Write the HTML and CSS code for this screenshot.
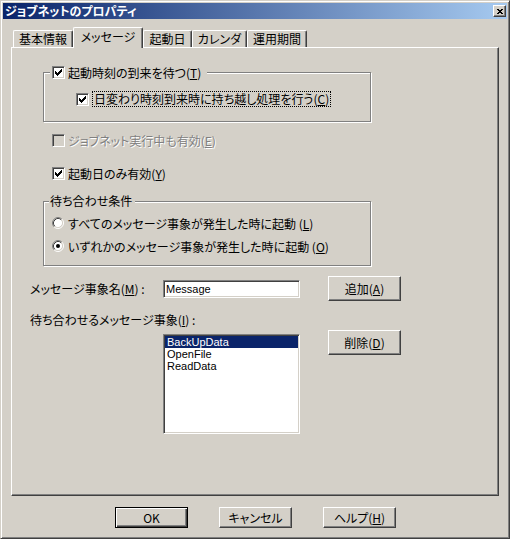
FILE: index.html
```html
<!DOCTYPE html>
<html lang="ja">
<head>
<meta charset="utf-8">
<title>ジョブネットのプロパティ</title>
<link rel="stylesheet" href="styles.css">
</head>
<body>
<div class="window">
  <div class="titlebar">
    <span class="title">ジョブネットのプロパティ</span>
    <span class="close"><svg width="6" height="5" viewBox="0 0 6 5"><path d="M0 0h2v1H0zM4 0h2v1H4zM1 1h4v1H1zM2 2h2v1H2zM1 3h4v1H1zM0 4h2v1H0zM4 4h2v1H4z" fill="#000"/></svg></span>
  </div>
  <div class="content">
    <div class="tabs">
      <div class="tab t1">基本情報</div>
      <div class="tab active t2">メッセージ</div>
      <div class="tab t3">起動日</div>
      <div class="tab t4">カレンダ</div>
      <div class="tab t5">運用期間</div>
    </div>
    <div class="panel">
      <div class="groupbox g1">
        <div class="gb-caption cap-check">
          <span class="cb"><svg width="7" height="7" viewBox="0 0 7 7"><path d="M0 2h1v3H0zM1 3h1v3H1zM2 4h1v3H2zM3 3h1v3H3zM4 2h1v3H4zM5 1h1v3H5zM6 0h1v3H6z" fill="#000"/></svg></span>
          <span class="lbl">起動時刻の到来を待つ(<u>T</u>)</span>
        </div>
        <div class="row inner-row">
          <span class="cb"><svg width="7" height="7" viewBox="0 0 7 7"><path d="M0 2h1v3H0zM1 3h1v3H1zM2 4h1v3H2zM3 3h1v3H3zM4 2h1v3H4zM5 1h1v3H5zM6 0h1v3H6z" fill="#000"/></svg></span>
          <span class="lbl focus">日変わり時刻到来時に持ち越し処理を行う(<u>C</u>)</span>
        </div>
      </div>

      <div class="row opt-row r-exec disabled">
        <span class="cb cb-disabled"></span>
        <span class="lbl">ジョブネット実行中も有効(<u>E</u>)</span>
      </div>

      <div class="row opt-row r-day">
        <span class="cb"><svg width="7" height="7" viewBox="0 0 7 7"><path d="M0 2h1v3H0zM1 3h1v3H1zM2 4h1v3H2zM3 3h1v3H3zM4 2h1v3H4zM5 1h1v3H5zM6 0h1v3H6z" fill="#000"/></svg></span>
        <span class="lbl">起動日のみ有効(<u>Y</u>)</span>
      </div>

      <div class="groupbox g2">
        <div class="gb-caption cap-text">待ち合わせ条件</div>
        <div class="row radio-row rr1">
          <svg class="radio" width="12" height="12" viewBox="0 0 12 12">
            <circle cx="6" cy="6" r="4.5" fill="#fff"/>
            <path d="M2.11 9.89A5.5 5.5 0 0 1 9.89 2.11" fill="none" stroke="#808080"/>
            <path d="M9.89 2.11A5.5 5.5 0 0 1 2.11 9.89" fill="none" stroke="#fff"/>
            <path d="M2.82 9.18A4.5 4.5 0 0 1 9.18 2.82" fill="none" stroke="#404040"/>
            <path d="M9.18 2.82A4.5 4.5 0 0 1 2.82 9.18" fill="none" stroke="#d4d0c8"/>
          </svg>
          <span class="lbl">すべてのメッセージ事象が発生した時に起動 (<u>L</u>)</span>
        </div>
        <div class="row radio-row rr2">
          <svg class="radio" width="12" height="12" viewBox="0 0 12 12">
            <circle cx="6" cy="6" r="4.5" fill="#fff"/>
            <path d="M2.11 9.89A5.5 5.5 0 0 1 9.89 2.11" fill="none" stroke="#808080"/>
            <path d="M9.89 2.11A5.5 5.5 0 0 1 2.11 9.89" fill="none" stroke="#fff"/>
            <path d="M2.82 9.18A4.5 4.5 0 0 1 9.18 2.82" fill="none" stroke="#404040"/>
            <path d="M9.18 2.82A4.5 4.5 0 0 1 2.82 9.18" fill="none" stroke="#d4d0c8"/>
            <circle cx="6" cy="6" r="2" fill="#000"/>
          </svg>
          <span class="lbl">いずれかのメッセージ事象が発生した時に起動 (<u>O</u>)</span>
        </div>
      </div>

      <div class="field-row">
        <span class="field-label">メッセージ事象名(<u>M</u>) :</span>
        <div class="textbox">Message</div>
        <div class="btn btn-side">追加(<u>A</u>)</div>
      </div>

      <div class="list-label">待ち合わせるメッセージ事象(<u>I</u>) :</div>

      <div class="list-row">
        <div class="listbox">
          <div class="item sel">BackUpData</div>
          <div class="item">OpenFile</div>
          <div class="item">ReadData</div>
        </div>
        <div class="btn btn-side">削除(<u>D</u>)</div>
      </div>
    </div>

    <div class="buttons">
      <div class="btn btn-bottom btn-default">OK</div>
      <div class="btn btn-bottom">キャンセル</div>
      <div class="btn btn-bottom">ヘルプ(<u>H</u>)</div>
    </div>
  </div>
</div>
</body>
</html>
```

FILE: styles.css
```css
* { box-sizing: border-box; }

html, body {
  margin: 0;
  padding: 0;
}

body {
  width: 510px;
  height: 539px;
  overflow: hidden;
  background: #d4d0c8;
  font-family: "Noto Sans CJK JP", "Noto Sans", sans-serif;
  font-size: 12px;
  line-height: 12px;
  color: #000;
  font-feature-settings: "palt";
}

u {
  text-decoration: underline;
  text-underline-offset: 1px;
  text-decoration-thickness: 1px;
}

.window {
  width: 510px;
  height: 539px;
  background: #d4d0c8;
  border: 1px solid;
  border-color: #d4d0c8 #404040 #404040 #d4d0c8;
  box-shadow: inset 1px 1px 0 #fff, inset -1px -1px 0 #808080;
  padding: 2px;
  display: flex;
  flex-direction: column;
}

/* title bar */
.titlebar {
  height: 16px;
  display: flex;
  align-items: center;
  padding-left: 2px;
  background: linear-gradient(to right, #0a246a, #a6caf0);
}

.title {
  flex: 1;
  color: #fff;
  font-weight: bold;
  line-height: 14px;
}

.close {
  width: 13px;
  height: 12px;
  margin-right: 1px;
  background: #d4d0c8;
  border: 1px solid;
  border-color: #fff #404040 #404040 #fff;
  box-shadow: inset -1px -1px 0 #808080;
  display: flex;
  align-items: center;
  justify-content: center;
}

.close svg { display: block; }

/* body */
.content {
  padding: 8px 8px 0 8px;
  display: flex;
  flex-direction: column;
}

.tabs {
  display: flex;
  align-items: flex-end;
  height: 20px;
  padding-left: 2px;
}

.tab {
  height: 17px;
  background: #d4d0c8;
  border-top: 1px solid #fff;
  border-left: 1px solid #fff;
  border-right: 1px solid #404040;
  border-radius: 2px 2px 0 0;
  box-shadow: inset -1px 0 0 #808080;
  display: flex;
  align-items: center;
  justify-content: center;
  white-space: nowrap;
}

.tab.active {
  height: 21px;
  margin-bottom: -1px;
  padding-bottom: 2px;
  z-index: 1;
}

.t1 { width: 60px; }
.t2 { width: 70px; }
.t3 { width: 49px; }
.t4 { width: 55px; }
.t5 { width: 60px; }

.panel {
  height: 449px;
  border: 1px solid;
  border-color: #fff #404040 #404040 #fff;
  box-shadow: inset -1px -1px 0 #808080;
  display: flex;
  flex-direction: column;
  align-items: flex-start;
}

/* group boxes */
.groupbox {
  width: 328px;
  margin-left: 31px;
  border: 1px solid #808080;
  box-shadow: inset 1px 1px 0 #fff, 1px 1px 0 #fff;
  display: flex;
  flex-direction: column;
  align-items: flex-start;
}

.g1 { height: 50px; margin-top: 24px; }
.g2 { height: 65px; margin-top: 21px; }

.gb-caption {
  background: #d4d0c8;
  white-space: nowrap;
}

.cap-check {
  height: 13px;
  margin-top: -7px;
  margin-left: 6px;
  padding: 0 6px 0 2px;
  display: flex;
  align-items: center;
  gap: 3px;
}

.cap-text {
  height: 12px;
  margin-top: -7px;
  margin-left: 5px;
  padding: 0 3px 0 1px;
}

.row {
  display: flex;
  align-items: center;
  white-space: nowrap;
}

.lbl { line-height: 13px; }

.inner-row {
  margin-top: 12px;
  margin-left: 32px;
  gap: 3px;
}

.focus {
  border: 1px dotted #000;
  padding: 0 1px;
  line-height: 14px;
}

.opt-row {
  height: 13px;
  margin-left: 40px;
  gap: 3px;
}

.r-exec { margin-top: 12px; }
.r-day { margin-top: 20px; }

.disabled .lbl {
  color: #808080;
  text-shadow: 1px 1px 0 #fff;
}

.radio-row {
  height: 12px;
  margin-left: 8px;
  gap: 4px;
}

.rr1 { margin-top: 10px; }
.rr2 { margin-top: 11px; }

.radio { display: block; flex: none; }

/* check box */
.cb {
  width: 13px;
  height: 13px;
  flex: none;
  background: #fff;
  border: 1px solid;
  border-color: #808080 #fff #fff #808080;
  box-shadow: inset 1px 1px 0 #404040, inset -1px -1px 0 #d4d0c8;
  display: flex;
  align-items: center;
  justify-content: center;
}

.cb svg { display: block; }

.cb-disabled { background: #d4d0c8; }

/* fields */
.field-row {
  display: flex;
  align-items: flex-start;
  margin-top: 10px;
  margin-left: 18px;
}

.field-label {
  width: 133px;
  margin-top: 7px;
  white-space: nowrap;
}

.textbox {
  width: 137px;
  height: 18px;
  margin-top: 4px;
  padding-left: 2px;
  background: #fff;
  border: 1px solid;
  border-color: #808080 #fff #fff #808080;
  box-shadow: inset 1px 1px 0 #404040, inset -1px -1px 0 #d4d0c8;
  display: flex;
  align-items: center;
  font-family: "Liberation Sans", Arial, sans-serif;
  font-size: 11px;
}

.list-label {
  margin-top: 13px;
  margin-left: 18px;
  white-space: nowrap;
}

.list-row {
  display: flex;
  align-items: flex-start;
  margin-top: 4px;
  margin-left: 151px;
}

.listbox {
  width: 137px;
  height: 100px;
  margin-top: 4px;
  padding: 1px;
  background: #fff;
  border: 1px solid;
  border-color: #808080 #fff #fff #808080;
  box-shadow: inset 1px 1px 0 #404040, inset -1px -1px 0 #d4d0c8;
  font-family: "Liberation Sans", Arial, sans-serif;
  font-size: 11px;
}

.item {
  height: 12px;
  line-height: 12px;
  padding-left: 2px;
  white-space: nowrap;
}

.item.sel {
  background: #0a246a;
  color: #fff;
}

/* buttons */
.btn {
  width: 73px;
  background: #d4d0c8;
  border: 1px solid;
  border-color: #fff #404040 #404040 #fff;
  box-shadow: inset -1px -1px 0 #808080;
  display: flex;
  align-items: center;
  justify-content: center;
  white-space: nowrap;
}

.btn-side {
  height: 25px;
  margin-left: 28px;
}

.buttons {
  display: flex;
  gap: 31px;
  margin-top: 11px;
  padding-left: 104px;
}

.btn-bottom { height: 21px; }

.btn-default {
  border: 1px solid #000;
  box-shadow: inset 1px 1px 0 #fff, inset -1px -1px 0 #404040, inset -2px -2px 0 #808080;
}
```
